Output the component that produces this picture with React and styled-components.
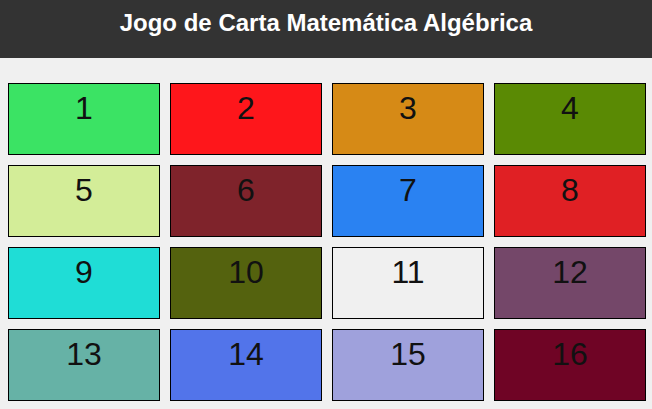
import React from 'react';
import styled, { createGlobalStyle } from 'styled-components';

const GlobalStyle = createGlobalStyle`
    body {
        margin: 0;
        background-color: #f0f0f0;
        font-family: "Liberation Sans", Arial, sans-serif;
    }
`;

const Header = styled.header`
    height: 58px;
    background-color: #333333;
    display: flex;
    justify-content: center;
    align-items: center;
    padding-bottom: 12px;
    box-sizing: border-box;
`;

const Title = styled.h1`
    margin: 0;
    color: #ffffff;
    font-size: 24px;
    font-weight: bold;
`;

const Board = styled.div`
    display: grid;
    grid-template-columns: repeat(4, 152px);
    gap: 10px;
    padding: 25px 8px 8px;
`;

const Card = styled.div`
    height: 72px;
    box-sizing: border-box;
    border: 1px solid #000;
    background-color: ${(p) => p.$color};
    color: #111;
    font-size: 32px;
    text-align: center;
    padding-top: 6px;
`;

const cards = [
  '#3be364', '#fe161b', '#d68a16', '#5a8a04',
  '#d3ed98', '#7f232b', '#2a82f2', '#e02024',
  '#1fddd6', '#54620e', '#f0f0f0', '#744769',
  '#66b2a6', '#5274ea', '#9fa1dc', '#6f0425',
];

function App() {
  return (
    <>
      <GlobalStyle />
      <Header>
        <Title>Jogo de Carta Matemática Algébrica</Title>
      </Header>
      <Board>
        {cards.map((color, i) => (
          <Card key={i} $color={color}>{i + 1}</Card>
        ))}
      </Board>
    </>
  );
}

export default App;
